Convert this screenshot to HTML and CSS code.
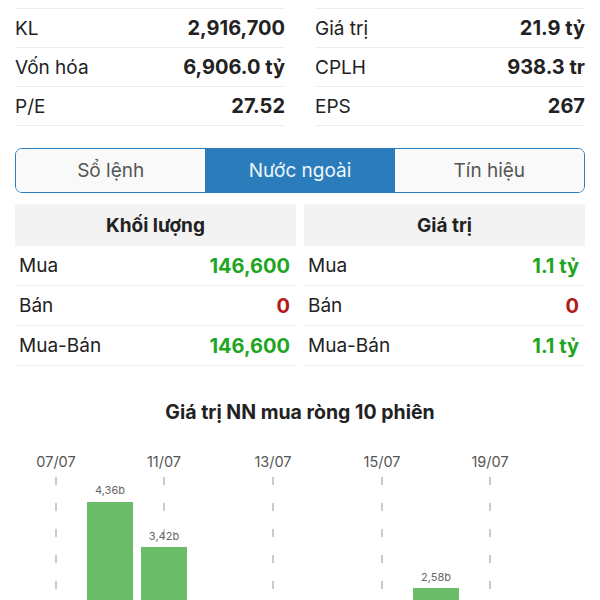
FILE: index.html
```html
<!DOCTYPE html>
<html lang="vi">
<head>
    <meta charset="UTF-8">
    <meta name="viewport" content="width=device-width, initial-scale=1.0">
    <title>Nước ngoài</title>
    <link rel="stylesheet" href="styles.css">
</head>
<body>
    <div class="page">
        <section class="stats">
            <div class="stats-col">
                <div class="stat-row"><span class="stat-label">KL</span><span class="stat-value">2,916,700</span></div>
                <div class="stat-row"><span class="stat-label">Vốn hóa</span><span class="stat-value">6,906.0 tỷ</span></div>
                <div class="stat-row"><span class="stat-label">P/E</span><span class="stat-value">27.52</span></div>
            </div>
            <div class="stats-col">
                <div class="stat-row"><span class="stat-label">Giá trị</span><span class="stat-value">21.9 tỷ</span></div>
                <div class="stat-row"><span class="stat-label">CPLH</span><span class="stat-value">938.3 tr</span></div>
                <div class="stat-row"><span class="stat-label">EPS</span><span class="stat-value">267</span></div>
            </div>
        </section>

        <nav class="tabs">
            <div class="tab">Sổ lệnh</div>
            <div class="tab active">Nước ngoài</div>
            <div class="tab">Tín hiệu</div>
        </nav>

        <section class="foreign">
            <div class="foreign-col">
                <div class="foreign-head">Khối lượng</div>
                <div class="foreign-row"><span>Mua</span><span class="up">146,600</span></div>
                <div class="foreign-row"><span>Bán</span><span class="down">0</span></div>
                <div class="foreign-row"><span>Mua-Bán</span><span class="up">146,600</span></div>
            </div>
            <div class="foreign-col">
                <div class="foreign-head">Giá trị</div>
                <div class="foreign-row"><span>Mua</span><span class="up">1.1 tỷ</span></div>
                <div class="foreign-row"><span>Bán</span><span class="down">0</span></div>
                <div class="foreign-row"><span>Mua-Bán</span><span class="up">1.1 tỷ</span></div>
            </div>
        </section>

        <section class="chart">
            <h3 class="chart-title">Giá trị NN mua ròng 10 phiên</h3>
            <svg class="chart-svg" width="600" height="200" viewBox="0 0 600 200">
                <!-- date labels -->
                <g class="axis-label">
                    <text x="56" y="28">07/07</text>
                    <text x="164" y="28">11/07</text>
                    <text x="273" y="28">13/07</text>
                    <text x="382" y="28">15/07</text>
                    <text x="490" y="28">19/07</text>
                </g>
                <!-- grid lines -->
                <g class="grid-line">
                    <line x1="56" y1="38" x2="56" y2="200"/>
                    <line x1="164" y1="38" x2="164" y2="200"/>
                    <line x1="273" y1="38" x2="273" y2="200"/>
                    <line x1="382" y1="38" x2="382" y2="200"/>
                    <line x1="490" y1="38" x2="490" y2="200"/>
                </g>
                <!-- bars -->
                <g class="bar">
                    <rect x="87" y="63" width="46" height="137"/>
                    <rect x="141" y="108" width="46" height="92"/>
                    <rect x="413" y="149" width="46" height="51"/>
                </g>
                <g class="bar-label">
                    <text x="110" y="55">4,36b</text>
                    <text x="164" y="101">3,42b</text>
                    <text x="436" y="142">2,58b</text>
                </g>
            </svg>
        </section>
    </div>
</body>
</html>
```

FILE: styles.css
```css
html, body {
    margin: 0;
    padding: 0;
    background-color: #fff;
    color: #222;
    font-family: Inter, "Noto Sans", sans-serif;
    width: 100%;
    height: 100%;
    overflow: hidden;
}

.page {
    padding: 8px 15px 0 15px;
}

/* top stats */
.stats {
    display: grid;
    grid-template-columns: 1fr 1fr;
    gap: 30px;
}

.stats-col {
    border-top: 1px solid #ededed;
}

.stat-row {
    display: flex;
    align-items: center;
    justify-content: space-between;
    height: 38px;
    border-bottom: 1px solid #ededed;
    font-size: 19px;
}

.stat-label {
    color: #222;
}

.stat-value {
    font-size: 20px;
    font-weight: 700;
}

/* tabs */
.tabs {
    display: flex;
    margin-top: 22px;
    border: 1.5px solid #2f7fbd;
    border-radius: 7px;
    overflow: hidden;
    height: 43px;
}

.tab {
    flex: 1;
    display: flex;
    align-items: center;
    justify-content: center;
    font-size: 19px;
    color: #555;
    background-color: #f9f9f9;
}

.tab.active {
    background-color: #2b7cbb;
    color: #eef6fc;
}

/* foreign trade tables */
.foreign {
    display: grid;
    grid-template-columns: 1fr 1fr;
    gap: 8px;
    margin-top: 11px;
}

.foreign-head {
    height: 42px;
    display: flex;
    align-items: center;
    justify-content: center;
    background-color: #f3f3f3;
    font-size: 19px;
    font-weight: 700;
}

.foreign-row {
    display: flex;
    align-items: center;
    justify-content: space-between;
    height: 39px;
    padding: 0 6px 0 4px;
    border-bottom: 1px solid #efefef;
    font-size: 19px;
}

.foreign-row .up {
    color: #1fa51f;
    font-size: 20px;
    font-weight: 700;
}

.foreign-row .down {
    color: #b41818;
    font-size: 20px;
    font-weight: 700;
}

/* chart */
.chart {
    margin: 0 -15px;
}

.chart-title {
    margin: 34px 0 0 0;
    line-height: 24px;
    font-size: 19.5px;
    font-weight: 700;
    text-align: center;
}

.chart-svg {
    display: block;
    margin-top: 15px;
}

.axis-label text {
    font-size: 14.5px;
    fill: #555;
    text-anchor: middle;
}

.grid-line line {
    stroke: #b9b9b9;
    stroke-width: 1.5;
    stroke-dasharray: 8 18;
}

.bar rect {
    fill: #6cbd6a;
}

.bar-label text {
    font-size: 11px;
    fill: #666;
    text-anchor: middle;
}
```
